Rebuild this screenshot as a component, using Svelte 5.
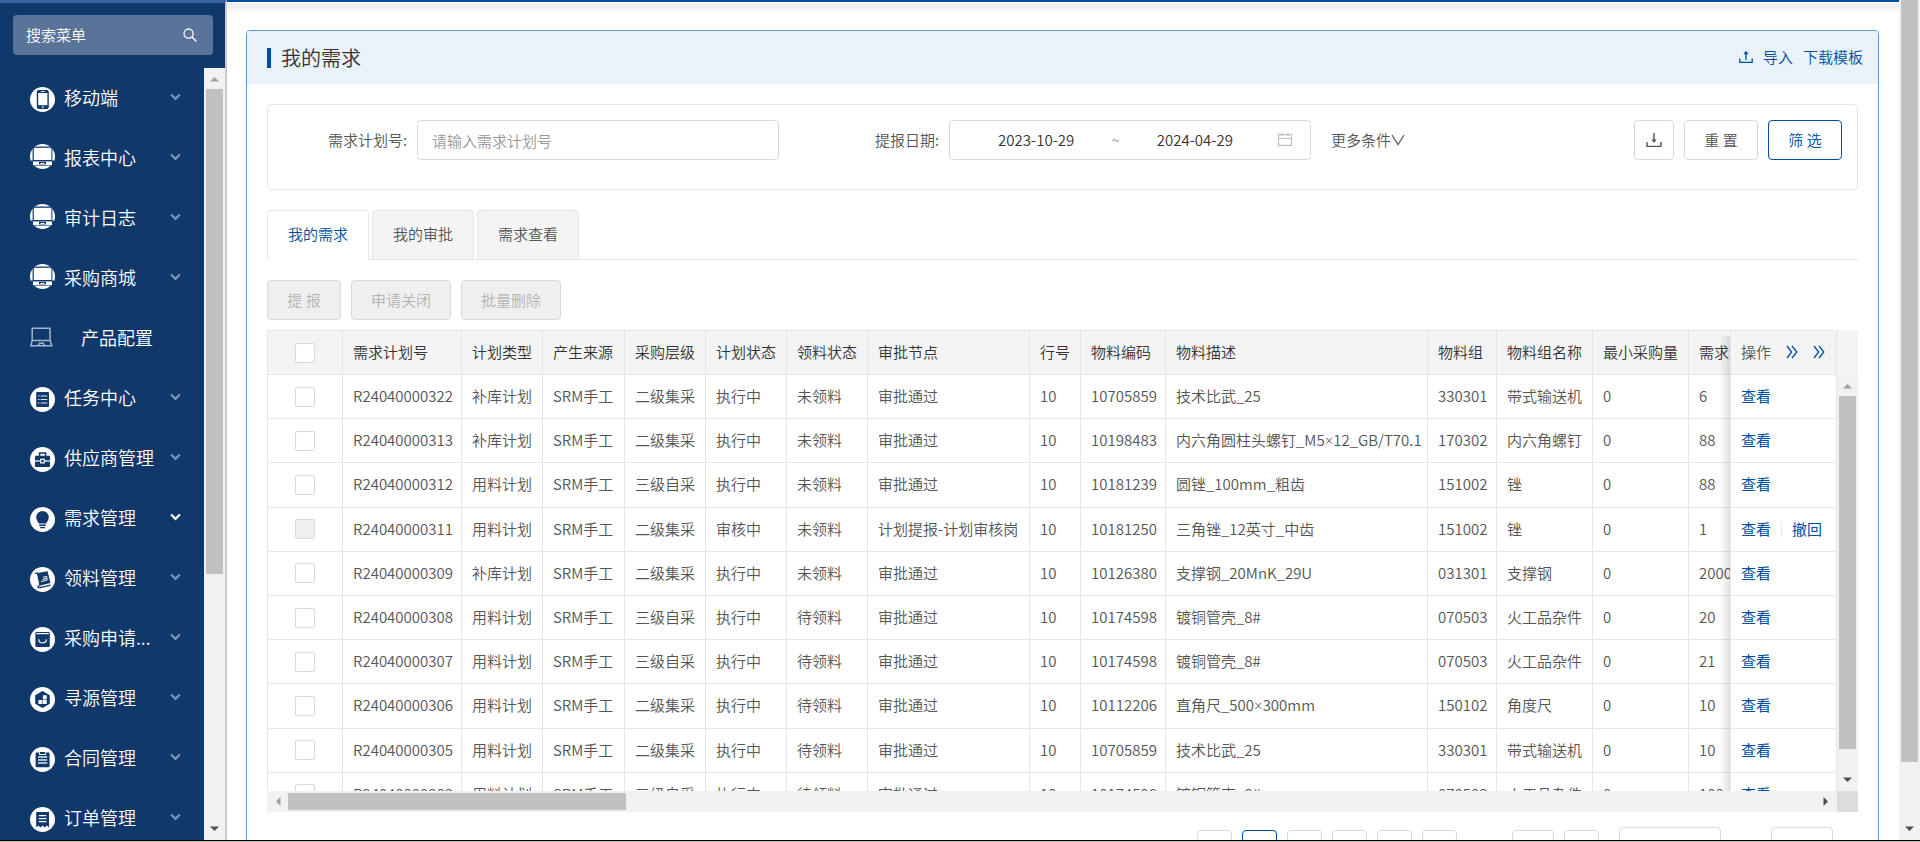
<script>
  const menu = [
    { label: '移动端', icon: 'phone' },
    { label: '报表中心', icon: 'monitor' },
    { label: '审计日志', icon: 'monitor' },
    { label: '采购商城', icon: 'monitor' },
    { label: '产品配置', icon: 'laptop', leaf: true },
    { label: '任务中心', icon: 'list' },
    { label: '供应商管理', icon: 'case' },
    { label: '需求管理', icon: 'bulb', active: true },
    { label: '领料管理', icon: 'book' },
    { label: '采购申请...', icon: 'bag' },
    { label: '寻源管理', icon: 'hex' },
    { label: '合同管理', icon: 'clip' },
    { label: '订单管理', icon: 'receipt' }
  ];

  const columns = [
    ['需求计划号', 119], ['计划类型', 81], ['产生来源', 82], ['采购层级', 81],
    ['计划状态', 81], ['领料状态', 81], ['审批节点', 162], ['行号', 51],
    ['物料编码', 85], ['物料描述', 262], ['物料组', 69], ['物料组名称', 96],
    ['最小采购量', 96], ['需求数量', 160]
  ];

  const rows = [
    ['R24040000322', '补库计划', 'SRM手工', '二级集采', '执行中', '未领料', '审批通过', '10', '10705859', '技术比武_25', '330301', '带式输送机', '0', '6'],
    ['R24040000313', '补库计划', 'SRM手工', '二级集采', '执行中', '未领料', '审批通过', '10', '10198483', '内六角圆柱头螺钉_M5×12_GB/T70.1', '170302', '内六角螺钉', '0', '88'],
    ['R24040000312', '用料计划', 'SRM手工', '三级自采', '执行中', '未领料', '审批通过', '10', '10181239', '圆锉_100mm_粗齿', '151002', '锉', '0', '88'],
    ['R24040000311', '用料计划', 'SRM手工', '二级集采', '审核中', '未领料', '计划提报-计划审核岗', '10', '10181250', '三角锉_12英寸_中齿', '151002', '锉', '0', '1'],
    ['R24040000309', '补库计划', 'SRM手工', '二级集采', '执行中', '未领料', '审批通过', '10', '10126380', '支撑钢_20MnK_29U', '031301', '支撑钢', '0', '2000'],
    ['R24040000308', '用料计划', 'SRM手工', '三级自采', '执行中', '待领料', '审批通过', '10', '10174598', '镀铜管壳_8#', '070503', '火工品杂件', '0', '20'],
    ['R24040000307', '用料计划', 'SRM手工', '三级自采', '执行中', '待领料', '审批通过', '10', '10174598', '镀铜管壳_8#', '070503', '火工品杂件', '0', '21'],
    ['R24040000306', '用料计划', 'SRM手工', '二级集采', '执行中', '待领料', '审批通过', '10', '10112206', '直角尺_500×300mm', '150102', '角度尺', '0', '10'],
    ['R24040000305', '用料计划', 'SRM手工', '二级集采', '执行中', '待领料', '审批通过', '10', '10705859', '技术比武_25', '330301', '带式输送机', '0', '10'],
    ['R24040000303', '用料计划', 'SRM手工', '三级自采', '执行中', '待领料', '审批通过', '10', '10174598', '镀铜管壳_8#', '070503', '火工品杂件', '0', '100']
  ];

  const tabs = ['我的需求', '我的审批', '需求查看'];
  let current = $state(0);
</script>

{#snippet menuIcon(kind)}
  <svg class="micon {kind}" viewBox="0 0 25 25" aria-hidden="true">
    {#if kind !== 'laptop'}<circle cx="12.5" cy="12.5" r="12.5" fill="#fff" />{/if}
    {#if kind === 'phone'}
      <rect x="6.8" y="3" width="12" height="19" rx="2" fill="#10386b" />
      <rect x="8.2" y="6" width="9.2" height="12.2" fill="#fff" />
      <rect x="10.8" y="4.2" width="4" height="0.8" fill="#fff" />
      <circle cx="12.8" cy="20.1" r="0.9" fill="#fff" />
    {:else if kind === 'monitor'}
      <path d="M2.6 2.6H22.4V16.6H24V21.8H1V16.6H2.6Z" fill="#10386b" />
      <rect x="3.8" y="3.8" width="17.6" height="12.2" fill="#fff" />
      <path d="M3 17.4H22V21.2H3Z" fill="#fff" />
      <path d="M9 17.8H16V20.4H9Z" fill="#10386b" />
      <rect x="10.4" y="19" width="4.2" height="1" fill="#fff" />
    {:else if kind === 'laptop'}
      <path d="M2.2 3.2H20V15.4H2.2Z M2.2 15.4L0.8 20.8H21.8L20.2 15.4M8.6 20.6L9.4 18.2H13.4L14.2 20.6" fill="none" stroke="#a5b4c9" stroke-width="1.5" />
    {:else if kind === 'list'}
      <rect x="6.2" y="5" width="12.8" height="15" rx="0.8" fill="#10386b" />
      <path d="M8 9h1.5M8 12.5h1.5M8 16h1.5M10.6 9h6.6M10.6 12.5h6.6M10.6 16h6.6" stroke="#dfe6ef" stroke-width="1.1" />
    {:else if kind === 'case'}
      <path d="M9.6 9V6H15.6V9" fill="none" stroke="#10386b" stroke-width="1.5" />
      <rect x="5" y="8.7" width="15" height="11.2" rx="1" fill="#10386b" />
      <path d="M5 14h15" stroke="#fff" stroke-width="1.2" />
      <rect x="9.8" y="11.5" width="5.2" height="5.2" fill="#10386b" />
      <rect x="10.7" y="12.3" width="3.6" height="3.6" fill="none" stroke="#fff" stroke-width="1.2" />
    {:else if kind === 'bulb'}
      <path d="M12.5 4A6.3 6.3 0 0 1 18.8 10.2C18.8 12.8 17.2 14.2 16.2 16.4H8.8C7.8 14.2 6.2 12.8 6.2 10.2A6.3 6.3 0 0 1 12.5 4Z" fill="#10386b" />
      <path d="M9.2 18.2h6.6M10 20.6h5" stroke="#10386b" stroke-width="1.4" />
    {:else if kind === 'book'}
      <path d="M7.4 6L17.6 4.2L20.4 16L10.4 18.4Z" fill="#10386b" />
      <path d="M4.8 6.5L7.4 6L10 18.6C6.8 18.4 7.4 21.5 10.2 20.6L20.6 18.2" fill="none" stroke="#10386b" stroke-width="1.2" />
      <path d="M11 14.5L17.2 13L16.6 9.4L13.2 10.2M12.6 12.3L16.4 11.4" fill="none" stroke="#fff" stroke-width="1" />
    {:else if kind === 'bag'}
      <rect x="5.4" y="5" width="14.4" height="15" rx="1.2" fill="#10386b" />
      <path d="M6.4 6.6H18.8" stroke="#fff" stroke-width="1.2" />
      <path d="M8.8 12.2C8.8 17.2 16.4 17.2 16.4 12.2" fill="none" stroke="#dfe6ef" stroke-width="1.3" />
    {:else if kind === 'hex'}
      <path d="M12.5 4L19.8 8.2V16.8L12.5 21L5.2 16.8V8.2Z" fill="#10386b" />
      <path d="M12.9 8.2H16.8V12.4H12.9ZM8.4 12.9H12.4V17H8.4ZM12.9 12.9H16.8V17H12.9Z" fill="#f4f6f9" />
    {:else if kind === 'clip'}
      <rect x="5.6" y="5.6" width="14" height="14.6" rx="0.8" fill="#10386b" />
      <rect x="9" y="4" width="7" height="4" fill="#fff" />
      <rect x="9.8" y="5" width="5.4" height="2" fill="#10386b" />
      <path d="M8 10h9.2M8 13h9.2M8 16h9.2" stroke="#dfe6ef" stroke-width="1.3" />
    {:else}
      <path d="M6.2 5H19V20.4L16.9 18.4L14.8 20.4L12.6 18.4L10.4 20.4L8.3 18.4L6.2 20.4Z" fill="#10386b" />
      <path d="M8.8 8.6h7.6M8.8 11.6h7.6M8.8 14.6h7.6" stroke="#fff" stroke-width="1.2" />
    {/if}
  </svg>
{/snippet}

{#snippet arrow(dir, dark)}
  <svg class="arrow {dir}" viewBox="0 0 21 21" aria-hidden="true">
    <path d="M6 13.5L10.5 9L15 13.5Z" fill={dark ? '#4f4f4f' : '#a0a0a0'} />
  </svg>
{/snippet}

{#snippet doubleRight()}
  <svg class="dbl" viewBox="0 0 12 14" aria-hidden="true">
    <path d="M1 1L5.6 7L1 13M6 1L10.8 7L6 13" fill="none" stroke="#004ea2" stroke-width="1.3" />
  </svg>
{/snippet}

<div class="app">
  <aside>
    <div class="search">
      <input type="text" placeholder="搜索菜单" aria-label="搜索菜单" />
      <svg viewBox="0 0 14 14" aria-hidden="true"><circle cx="5.6" cy="5.6" r="4.6" fill="none" stroke="#fff" stroke-width="1.3" /><path d="M9 9L13.4 13.4" stroke="#fff" stroke-width="1.4" /></svg>
    </div>
    <div class="menubox">
      <ul>
        {#each menu as item}
          <li>
            <button class="item" class:leaf={item.leaf}>
              {@render menuIcon(item.icon)}
              <span>{item.label}</span>
              {#if !item.leaf}
                <svg class="chev" class:on={item.active} viewBox="0 0 12 8" aria-hidden="true"><path d="M1.2 1.2L6 6L10.8 1.2" fill="none" stroke="currentColor" stroke-width="2.4" /></svg>
              {/if}
            </button>
          </li>
        {/each}
      </ul>
      <div class="bar v">
        {@render arrow('up', false)}
        <div class="track"><div class="thumb" style="height: 66.5%"></div></div>
        {@render arrow('down', true)}
      </div>
    </div>
  </aside>

  <main>
    <section class="card">
      <header>
        <h1>我的需求</h1>
        <div class="links">
          <button class="link">
            <svg viewBox="0 0 14 14" aria-hidden="true"><path d="M0.8 8.6V12.4H13.2V8.6M7 10V2" fill="none" stroke="currentColor" stroke-width="1.3" /><path d="M4.4 4.2L7 0.8L9.6 4.2Z" fill="currentColor" /></svg>
            导入
          </button>
          <button class="link">下载模板</button>
        </div>
      </header>

      <div class="body">
        <form class="filter" onsubmit={(e) => e.preventDefault()}>
          <div class="field">
            <label for="plan">需求计划号:</label>
            <input id="plan" type="text" placeholder="请输入需求计划号" />
          </div>
          <div class="field">
            <label for="from">提报日期:</label>
            <div class="range">
              <input id="from" type="text" value="2023-10-29" />
              <span>~</span>
              <input type="text" value="2024-04-29" aria-label="提报日期" />
              <svg viewBox="0 0 14 14" aria-hidden="true"><path d="M0.6 2.6H13.4V13.4H0.6ZM0.6 6.5H13.4M4 0.4V4M10 0.4V4" fill="none" stroke="#bfbfbf" stroke-width="1.1" /></svg>
            </div>
          </div>
          <button type="button" class="more">更多条件<svg viewBox="0 0 14 12" aria-hidden="true"><path d="M1 1L7 10.6L13 1" fill="none" stroke="currentColor" stroke-width="1.2" /></svg></button>
          <div class="acts">
            <button type="button" class="btn square" aria-label="下载"><svg viewBox="0 0 16 16" aria-hidden="true"><path d="M1 10V14.4H15V10M8 1V9" fill="none" stroke="currentColor" stroke-width="1.4" /><path d="M5.4 7.6L8 11L10.6 7.6Z" fill="currentColor" /></svg></button>
            <button type="button" class="btn">重 置</button>
            <button type="submit" class="btn primary">筛 选</button>
          </div>
        </form>

        <div class="tabs" role="tablist">
          {#each tabs as t, i}
            <button role="tab" aria-selected={current === i} class:on={current === i} onclick={() => (current = i)}>{t}</button>
          {/each}
        </div>

        <div class="tools">
          <button class="btn" disabled>提 报</button>
          <button class="btn" disabled>申请关闭</button>
          <button class="btn" disabled>批量删除</button>
        </div>

        <div class="grid">
          <div class="view">
            <table>
              <colgroup>
                <col style="width: 76px" />
                {#each columns as c}<col style="width: {c[1]}px" />{/each}
                <col style="width: 107px" />
              </colgroup>
              <thead>
                <tr>
                  <th class="pick"><input type="checkbox" aria-label="全选" /></th>
                  {#each columns as c}<th>{c[0]}</th>{/each}
                  <th class="op"><div class="ophead">操作 {@render doubleRight()} {@render doubleRight()}</div></th>
                </tr>
              </thead>
              <tbody>
                {#each rows as r, i}
                  <tr>
                    <td class="pick"><input type="checkbox" disabled={i === 3} aria-label={r[0]} /></td>
                    {#each r as v}
                      <td>{#each v.split('×') as part, k}{#if k}<span class="times">×</span>{/if}{part}{/each}</td>
                    {/each}
                    <td class="op">
                      <button class="link">查看</button>{#if i === 3}<i></i><button class="link">撤回</button>{/if}
                    </td>
                  </tr>
                {/each}
              </tbody>
            </table>
          </div>
          <div class="side">
            <div class="bar v">
              {@render arrow('up', false)}
              <div class="track"><div class="thumb" style="height: 94.5%"></div></div>
              {@render arrow('down', true)}
            </div>
          </div>
          <div class="bar h">
            {@render arrow('left', false)}
            <div class="track"><div class="thumb" style="width: 22.1%"></div></div>
            {@render arrow('right', true)}
          </div>
          <div class="corner"></div>
        </div>

        <nav class="pager" aria-label="分页">
          <button aria-label="上一页"></button>
          <button class="on" aria-label="1"></button>
          <button aria-label="2"></button>
          <button aria-label="3"></button>
          <button aria-label="4"></button>
          <button aria-label="5"></button>
          <button class="last" aria-label="末页"></button>
          <button aria-label="下一页"></button>
          <select aria-label="每页条数"></select>
          <input type="text" aria-label="页码" />
        </nav>
      </div>
    </section>
  </main>

  <div class="bar v page">
    <div class="track"><div class="thumb" style="height: 93%"></div></div>
    {@render arrow('down', true)}
  </div>
</div>

<style>
  :global(body) { margin: 0; background: #fff; }
  :global(#app) { font-family: 'Noto Sans CJK SC', sans-serif; }
  * { box-sizing: border-box; }
  button, input, select { font: inherit; color: inherit; }
  button { padding: 0; border: 0; background: none; cursor: pointer; }

  .app {
    display: grid;
    grid-template-columns: 227px minmax(0, 1fr) 21px;
    grid-template-rows: minmax(0, 1fr);
    height: 100vh;
    overflow: hidden;
    font-size: 15px;
    font-weight: 350;
    line-height: 22px;
    color: #555;
    border-bottom: 1px solid #b6b8a2;
    box-shadow: inset 0 -1px #000;
    padding-bottom: 1px;
  }

  aside {
    display: flex;
    flex-direction: column;
    min-height: 0;
    background: #10386b;
    border-top: 3px solid #3764a6;
    border-right: 2px solid #ccc;
    color: #fff;
  }
  .search {
    display: flex;
    align-items: center;
    flex: none;
    height: 40px;
    margin: 12px 12px 13px 13px;
    padding: 0 16px 0 13px;
    border-radius: 4px;
    background: #5a7398;
  }
  .search input { flex: 1; min-width: 0; padding: 0; border: 0; outline: 0; background: none; }
  .search input::placeholder { color: #fff; opacity: 1; }
  .search svg { width: 14px; height: 14px; }
  .menubox { display: flex; flex: 1; min-height: 0; }
  ul { flex: 1; min-width: 0; margin: 0; padding: 1px 0 0; list-style: none; overflow: hidden; }
  .item {
    display: flex;
    align-items: center;
    gap: 9px;
    width: 100%;
    height: 60px;
    padding: 0 23px 0 30px;
    font-size: 18px;
    line-height: 26px;
    text-align: left;
    white-space: nowrap;
  }
  .item span { flex: 1; padding-bottom: 4px; }
  .leaf { gap: 26px; }
  .micon { flex: none; width: 25px; height: 25px; }
  .monitor { margin-bottom: 6px; }
  .laptop { margin-bottom: 4px; }
  .chev { flex: none; width: 11px; height: 8px; margin-bottom: 4px; color: #7f94b2; }
  .chev.on { color: #fff; }

  .bar { display: flex; background: #f1f1f1; }
  .bar.v { flex-direction: column; flex: none; width: 21px; }
  .bar.h { height: 21px; }
  .track { flex: 1; display: flex; min-height: 0; }
  .v .track { padding: 0 2px; }
  .h .track { padding: 2px 0; }
  .thumb { background: #c1c1c1; }
  .v .thumb { width: 17px; }
  .h .thumb { height: 17px; }
  .arrow { flex: none; display: block; width: 21px; height: 21px; }
  .arrow.down { transform: rotate(180deg); }
  .arrow.left { transform: rotate(-90deg); }
  .arrow.right { transform: rotate(90deg); }

  main {
    min-width: 0;
    padding: 28px 20px 0 19px;
    border-top: 2px solid #004ea2;
    background: linear-gradient(#fff 1px, #ececf2 2px, #fff 12px);
    overflow: hidden;
  }
  .card { border: 1px solid #5f97cb; border-radius: 4px 4px 0 0; background: #fff; }
  header {
    display: flex;
    align-items: center;
    justify-content: space-between;
    height: 53px;
    padding: 0 15px 0 20px;
    background: #e9f1f9;
    border-radius: 3px 3px 0 0;
  }
  h1 {
    margin: 0;
    padding-left: 10px;
    border-left: 4px solid #004ea2;
    font-size: 20px;
    font-weight: 350;
    line-height: 20px;
    color: #333;
  }
  .links { display: flex; gap: 10px; }
  .link { color: #004ea2; white-space: nowrap; }
  .links .link { display: flex; align-items: center; gap: 10px; padding-bottom: 1px; }
  .link svg { width: 14px; height: 14px; }
  .body { padding: 20px; }

  .filter {
    display: flex;
    align-items: flex-start;
    height: 86px;
    padding: 15px;
    border: 1px solid #e6e6e6;
    border-radius: 4px;
  }
  .field { display: flex; align-items: center; flex: 0 1 496px; min-width: 0; gap: 10px; }
  .field + .field { margin-left: 36px; }
  label { flex: none; width: 124px; text-align: right; }
  #plan { flex: 1; min-width: 0; height: 40px; padding: 0 14px; border: 1px solid #d9d9d9; border-radius: 4px; outline: 0; background: #fff; }
  #plan::placeholder { color: #999; opacity: 1; }
  .range { display: flex; align-items: center; flex: 1; min-width: 0; height: 40px; padding: 0 18px 0 11px; border: 1px solid #d9d9d9; border-radius: 4px; color: #999; }
  .range input { flex: 1; width: 40px; min-width: 0; padding: 0; border: 0; outline: 0; background: none; text-align: center; color: #333; }
  .range svg { width: 14px; height: 14px; margin: 0 0 2px 8px; }
  .more { display: flex; align-items: center; height: 40px; margin-left: 20px; white-space: nowrap; }
  .more svg { width: 14px; height: 12px; }
  .acts { display: flex; gap: 10px; margin-left: auto; }
  .btn {
    height: 40px;
    min-width: 74px;
    padding: 0 19px;
    border: 1px solid #d9d9d9;
    border-radius: 4px;
    background: #fff;
    white-space: nowrap;
  }
  .btn.square { width: 40px; min-width: 0; padding: 0; display: grid; place-items: center; }
  .btn svg { width: 16px; height: 16px; }
  .btn.primary { border-color: #004ea2; color: #004ea2; }
  .btn:disabled { background: #efefef; color: #b3b3b3; }

  .tabs { display: flex; gap: 3px; margin-top: 20px; border-bottom: 1px solid #e6e6e6; }
  .tabs button {
    height: 49px;
    padding: 0 20px 2px;
    border: 1px solid #e6e6e6;
    border-bottom: 0;
    border-radius: 4px 4px 0 0;
    background: #f4f4f4;
  }
  .tabs button.on { height: 50px; margin-bottom: -1px; padding-bottom: 3px; background: #fff; color: #004ea2; }
  .tools { display: flex; gap: 10px; margin: 20px 0 10px; }

  .grid { display: grid; grid-template-columns: minmax(0, 1fr) 21px; }
  .view { height: calc(100vh - 381px); overflow: hidden; }
  .side { display: flex; padding-top: 45px; background: #f4f4f4; }
  .corner { background: #dcdcdc; }
  table { width: 1689px; height: 487px; table-layout: fixed; border-spacing: 0; }
  th, td {
    padding: 0 0 1px 10px;
    border-right: 1px solid #e6e6e6;
    border-bottom: 1px solid #e6e6e6;
    text-align: left;
    white-space: nowrap;
    background: #fff;
  }
  th { height: 45px; border-top: 1px solid #e6e6e6; background: #f4f4f4; font-weight: 350; color: #333; }
  .times { font-family: 'Open Sans', sans-serif; line-height: 15px; }
  .pick { padding: 0; border-left: 1px solid #e6e6e6; text-align: center; }
  .pick input { appearance: none; display: block; width: 20px; height: 20px; margin: 0 auto; border: 1px solid #d9d9d9; border-radius: 2px; background: #fff; }
  .pick input:disabled { background: #efefef; }
  .op { position: sticky; right: 0; border-left: 1px solid #e6e6e6; }
  .op::before {
    content: '';
    position: absolute;
    top: 0;
    bottom: -1px;
    left: -11px;
    width: 10px;
    background: linear-gradient(to left, rgba(0, 0, 0, 0.12), rgba(0, 0, 0, 0));
  }
  th.op::before { top: 5px; }
  .ophead { display: flex; align-items: center; gap: 15px; color: #555; }
  .dbl { width: 12px; height: 14px; }
  .op .link { font-weight: 400; }
  .op i { display: inline-block; width: 1px; height: 14px; margin: 0 10px; background: #e6e6e6; vertical-align: -2px; }

  .pager { display: flex; justify-content: flex-end; align-items: center; gap: 10px; margin-top: 15px; padding-right: 25px; }
  .pager button, .pager select, .pager input { width: 35px; height: 34px; border: 1px solid #d9d9d9; border-radius: 4px; background: #fff; }
  .pager .on { border-color: #004ea2; }
  .pager .last { width: 42px; margin-left: 45px; }
  .pager select { appearance: none; width: 102px; height: 40px; margin: 0 40px 0 10px; }
  .pager input { width: 62px; height: 40px; }
</style>
